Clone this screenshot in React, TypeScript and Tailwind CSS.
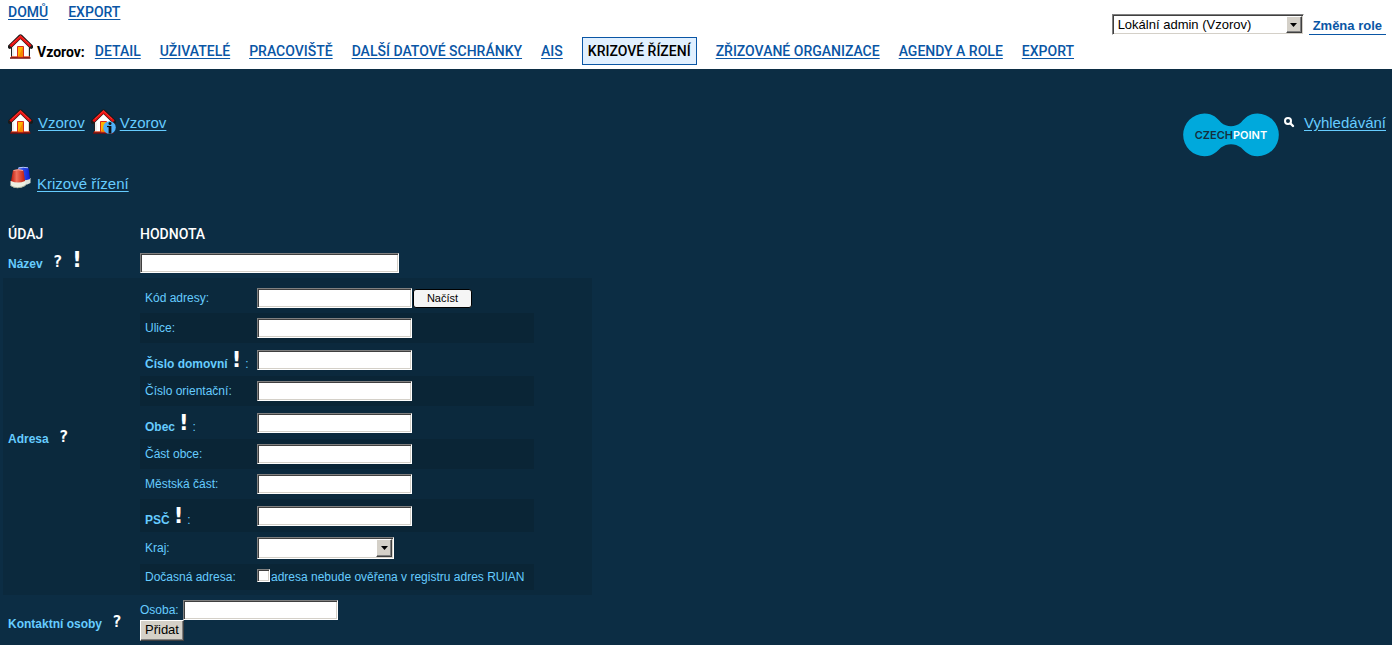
import type { ReactNode } from "react";
import clsx from "clsx";

const navItems = [
    "DETAIL",
    "UŽIVATELÉ",
    "PRACOVIŠTĚ",
    "DALŠÍ DATOVÉ SCHRÁNKY",
    "AIS",
    "KRIZOVÉ ŘÍZENÍ",
    "ZŘIZOVANÉ ORGANIZACE",
    "AGENDY A ROLE",
    "EXPORT",
];

const ACTIVE_ITEM = "KRIZOVÉ ŘÍZENÍ";

const sunken =
    "border border-t-[#808080] border-l-[#808080] border-r-white border-b-white bg-white shadow-[inset_1px_1px_0_#404040,inset_-1px_-1px_0_#d4d0c8] outline-none";

const raised =
    "border border-t-white border-l-white border-r-[#404040] border-b-[#404040] bg-[#d4d0c8] shadow-[inset_-1px_-1px_0_#808080]";

const HouseIcon = ({ info = false, className = "" }: { info?: boolean, className?: string }) => (
    <svg width="25" height="25" viewBox="0 0 25 25" className={clsx("shrink-0", className)} aria-hidden="true">
        <path d="M3.5 12 12.500 3.500 21.500 12V23.500H3.500Z" fill="#fff" stroke="#222" strokeWidth="1" />
        <path d="M5 13.500V23M20.500 13.500V23" stroke="#ddd" strokeWidth="1" />
        <path d="M2 24H22.500" stroke="#7a0d0d" strokeWidth="1.500" />
        <path d="M3 22.800H22" stroke="#e8401c" strokeWidth="1" />
        <path d="M9.500 23V12.500H15.500V23Z" fill="#ffb300" stroke="#d92b1c" strokeWidth="1" />
        <path d="M10.500 22.500 15 13V22.500Z" fill="#f58a00" />
        <path d="M1.800 12.800 12.500 2.300 23.200 12.800" fill="none" stroke="#1a1a1a" strokeWidth="4" strokeLinejoin="round" strokeLinecap="round" />
        <path d="M2.300 12.300 12.500 2.800 22.700 12.300" fill="none" stroke="#e90f0f" strokeWidth="2.600" />
        <path d="M4 9.900 12.500 2 21 9.900" fill="none" stroke="#ff4a40" strokeWidth="0.700" />
        {info && (
            <g>
                <circle cx="18.500" cy="18.500" r="6.300" fill="#4fb0f8" />
                <path d="M16 17.500H18.500" stroke="#111" strokeWidth="1.200" />
                <path d="M19 17V24.500" stroke="#111" strokeWidth="2.800" />
                <circle cx="19" cy="14.500" r="1.500" fill="#111" />
            </g>
        )}
    </svg>
);

const SirenIcon = () => (
    <svg width="21" height="24" viewBox="0 0 21 24" className="shrink-0" aria-hidden="true">
        <defs>
            <linearGradient id="redLamp" x1="0" x2="1">
                <stop offset="0" stopColor="#b91508" />
                <stop offset="0.4" stopColor="#f0705c" />
                <stop offset="1" stopColor="#c01a0c" />
            </linearGradient>
            <linearGradient id="blueLamp" x1="0" x2="1">
                <stop offset="0" stopColor="#7d9cf0" />
                <stop offset="0.500" stopColor="#2a48e6" />
                <stop offset="1" stopColor="#0c1fd0" />
            </linearGradient>
        </defs>
        <path d="M9 13V18Q15 20.500 20.500 17V12Z" fill="#dfe3da" />
        <path d="M8 2Q13 0.500 18.500 2L20 13Q14 15.500 7 13Z" fill="url(#blueLamp)" />
        <path d="M8.500 1.800Q13 0.800 18 1.800" stroke="#b8c8ff" fill="none" />
        <path d="M0.500 15V19.500Q7 24.500 15.500 19.500V15Z" fill="#eef0e2" />
        <path d="M0.500 19.500Q7 24 15.500 19.500" stroke="#a9b09a" fill="none" />
        <path d="M3 4.500Q8 2.500 13.500 4.500L15 15Q8 18 1 15Z" fill="url(#redLamp)" />
        <path d="M3.500 4.500Q8 3 13 4.500" stroke="#f5a596" fill="none" />
    </svg>
);

const CzechPointLogo = () => (
    <svg width="96" height="44" viewBox="0 0 96 44" role="img" aria-label="CzechPoint">
        <path
            d="M21.500 0.500C30 0.500 34 5 38 9.500C44 14.500 52 14.500 58 9.500C62 5 66 0.500 74.500 0.500A21.300 21.300 0 0 1 74.500 43.200C66 43.200 62 38.500 58 34.500C52 30 44 30 38 34.500C34 38.500 30 43.200 21.500 43.200A21.300 21.300 0 0 1 21.500 0.500Z"
            fill="#00a9dc"
        />
        <text x="48" y="26" textAnchor="middle" fontFamily="Inter, sans-serif" fontSize="11" fontWeight="600" fill="#fff">
            <tspan fill="#14303f">CZECH</tspan>
            POINT
        </text>
    </svg>
);

const SearchIcon = () => (
    <svg width="12" height="12" viewBox="0 0 12 12" aria-hidden="true">
        <circle cx="4" cy="4" r="3" fill="none" stroke="#fff" strokeWidth="2" />
        <path d="M6.500 6.500 9 9" stroke="#fff" strokeWidth="2.400" strokeLinecap="round" />
    </svg>
);

const Help = () => (
    <span className="inline-block text-[16px] leading-5 font-bold text-white font-['DejaVu_Sans_Mono',monospace]">?</span>
);

const Required = () => (
    <span className="inline-block text-[21px] leading-6 font-bold text-white font-['DejaVu_Sans',sans-serif]">!</span>
);

interface SelectProps {
    id: string,
    label: string,
    option: string,
    className: string
}

const Select = ({ id, label, option, className }: SelectProps) => (
    <div className={clsx("relative", className)}>
        <select
            id={id}
            aria-label={label}
            className={clsx("block w-full h-full appearance-none rounded-none pl-[5px] text-[13px] text-black", sunken)}
        >
            <option>{option}</option>
        </select>
        <span className={clsx("pointer-events-none absolute top-0.5 right-0.5 bottom-0.5 flex w-4 items-center justify-center", raised)}>
            <svg width="7" height="4" viewBox="0 0 7 4" aria-hidden="true">
                <path d="M0 0H7L3.500 4Z" fill="#000" />
            </svg>
        </span>
    </div>
);

const TextBox = ({ id, className = "w-[155px]" }: { id: string, className?: string }) => (
    <input id={id} type="text" className={clsx("block h-5 rounded-none px-1 text-[13px] text-black", sunken, className)} />
);

interface FieldRowProps {
    id: string,
    label: string,
    required?: boolean,
    shaded?: boolean,
    height?: string,
    children?: ReactNode
}

const FieldRow = ({ id, label, required, shaded, height = "h-[30px]", children }: FieldRowProps) => (
    <tr className={clsx(required ? "h-[33px]" : height, shaded && "bg-[#0a2536]")}>
        <td className="w-[117px] pl-[5px]">
            {required ? (
                <label htmlFor={id} className="flex items-end gap-1">
                    <b>{label}</b>
                    <Required />
                    <span>:</span>
                </label>
            ) : (
                <label htmlFor={id}>{label}:</label>
            )}
        </td>
        <td className="pr-2.5">{children ?? <TextBox id={id} />}</td>
    </tr>
);

const Header = () => (
    <header className="flex h-[69px] items-start justify-between bg-white pr-1.5 pl-2">
        <div>
            <nav className="flex h-6 items-center gap-5 text-[14px] font-medium text-[#0a56a5] font-[Roboto,sans-serif]">
                <a href="#" className="underline underline-offset-2">DOMŮ</a>
                <a href="#" className="underline underline-offset-2">EXPORT</a>
            </nav>
            <nav className="flex items-start pt-2.5 text-[14px] leading-5 font-medium text-[#0a56a5] whitespace-nowrap font-[Roboto,sans-serif]">
                <HouseIcon />
                <b className="mr-2.5 ml-1 pt-2 text-black">Vzorov:</b>
                <div className="flex items-center gap-[19px] pt-[3px]">
                    {navItems.map((item) => (
                        <a
                            key={item}
                            href="#"
                            className={
                                item === ACTIVE_ITEM
                                    ? "border border-[#0a56a5] bg-[#e1f0ff] px-[5px] py-[3px] text-black"
                                    : "underline underline-offset-2"
                            }
                        >
                            {item}
                        </a>
                    ))}
                </div>
            </nav>
        </div>
        <div className="flex items-start gap-[5px] pt-3.5">
            <Select id="role" label="Role" option="Lokální admin (Vzorov)" className="h-[21px] w-[192px]" />
            <a href="#" className="border-b border-[#0a56a5] px-1 pt-[3px] text-[13px] leading-[17px] font-bold whitespace-nowrap text-[#0a56a5]">
                Změna role
            </a>
        </div>
    </header>
);

export default function App() {
    return (
        <div className="flex min-h-screen flex-col bg-[#0c2d44] text-[12px] leading-4 text-[#66ccff] font-['Liberation_Sans',Arial,sans-serif]">
            <Header />
            <main>
                <div className="flex items-start justify-between pr-1.5 pl-2 pt-10 text-[15px] leading-5">
                    <div>
                        <div className="flex items-center">
                            <HouseIcon />
                            <a href="#" className="mt-0.5 ml-[5px] underline underline-offset-2">Vzorov</a>
                            <HouseIcon info className="ml-1.5" />
                            <a href="#" className="mt-0.5 ml-1 underline underline-offset-2">Vzorov</a>
                        </div>
                        <div className="flex items-center pt-7 pl-0.5">
                            <SirenIcon />
                            <a href="#" className="mt-3 ml-1.5 underline underline-offset-2">Krizové řízení</a>
                        </div>
                    </div>
                    <div className="flex items-start gap-[5px] pt-1">
                        <CzechPointLogo />
                        <div className="flex items-start gap-2">
                            <span className="pt-1"><SearchIcon /></span>
                            <a href="#" className="underline underline-offset-2">Vyhledávání</a>
                        </div>
                    </div>
                </div>

                <form onSubmit={(event) => event.preventDefault()}>
                    <table className="mt-[26px] ml-[3px] border-collapse">
                        <thead>
                            <tr className="h-[27px] text-left text-[14px] text-white font-[Roboto,sans-serif]">
                                <th className="w-[137px] pl-[5px] font-medium">ÚDAJ</th>
                                <th className="font-medium">HODNOTA</th>
                            </tr>
                        </thead>
                        <tbody>
                            <tr className="h-[31px]">
                                <td className="pb-1.5 pl-[5px]">
                                    <label htmlFor="nazev" className="flex items-end gap-2.5">
                                        <b>Název</b>
                                        <Help />
                                        <Required />
                                    </label>
                                </td>
                                <td><TextBox id="nazev" className="w-[259px]" /></td>
                            </tr>
                            <tr className="bg-[#0b293d]">
                                <th scope="row" className="pl-[5px] text-left">
                                    <span className="flex items-end gap-2.5">
                                        Adresa
                                        <Help />
                                    </span>
                                </th>
                                <td className="py-[5px] pr-[58px]">
                                    <table className="border-collapse">
                                        <tbody>
                                            <FieldRow id="kod" label="Kód adresy">
                                                <div className="flex items-center gap-px">
                                                    <TextBox id="kod" />
                                                    <button
                                                        type="button"
                                                        className="h-[19px] w-[59px] rounded-[3px] border border-black bg-[#f5f5f5] text-[11px] leading-4 text-black"
                                                    >
                                                        Načíst
                                                    </button>
                                                </div>
                                            </FieldRow>
                                            <FieldRow id="ulice" label="Ulice" shaded />
                                            <FieldRow id="cislo-domovni" label="Číslo domovní" required />
                                            <FieldRow id="cislo-orientacni" label="Číslo orientační" shaded />
                                            <FieldRow id="obec" label="Obec" required />
                                            <FieldRow id="cast-obce" label="Část obce" shaded />
                                            <FieldRow id="mestska-cast" label="Městská část" />
                                            <FieldRow id="psc" label="PSČ" required shaded />
                                            <FieldRow id="kraj" label="Kraj" height="h-8">
                                                <Select id="kraj" label="Kraj" option="" className="h-[22px] w-[137px]" />
                                            </FieldRow>
                                            <FieldRow id="docasna" label="Dočasná adresa" shaded height="h-[26px]">
                                                <label className="flex items-start whitespace-nowrap">
                                                    <input
                                                        id="docasna"
                                                        type="checkbox"
                                                        className={clsx("mr-px size-[13px] appearance-none", sunken)}
                                                    />
                                                    adresa nebude ověřena v registru adres RUIAN
                                                </label>
                                            </FieldRow>
                                        </tbody>
                                    </table>
                                </td>
                            </tr>
                            <tr className="h-[50px]">
                                <th scope="row" className="pt-1 pl-[5px] text-left">
                                    <span className="flex items-end gap-2.5">
                                        Kontaktní osoby
                                        <Help />
                                    </span>
                                </th>
                                <td>
                                    <div className="flex items-center gap-1">
                                        <label htmlFor="osoba">Osoba:</label>
                                        <TextBox id="osoba" />
                                    </div>
                                    <button type="button" className={clsx("block h-[21px] px-1 text-[13px] leading-4 text-black", raised)}>
                                        Přidat
                                    </button>
                                </td>
                            </tr>
                        </tbody>
                    </table>
                </form>
            </main>
        </div>
    );
}
